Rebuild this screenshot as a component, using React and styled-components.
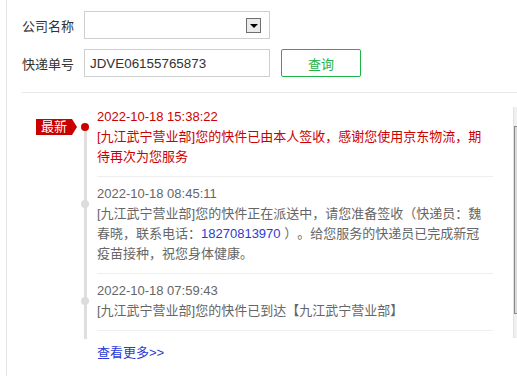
import styled, { createGlobalStyle } from "styled-components";

const GlobalStyle = createGlobalStyle`
  html, body {
    margin: 0;
    padding: 0;
    background: #fff;
    overflow: hidden;
  }
  body {
    font-family: "Liberation Sans", "Noto Sans CJK SC", sans-serif;
    font-size: 13px;
    color: #333;
  }
`;

const Page = styled.div`
  margin-left: 6px;
  border-left: 1px solid #e6e6e6;
  min-height: 376px;
`;

const Form = styled.div`
  display: flex;
  flex-direction: column;
  gap: 10px;
  padding: 11px 0 15px 15px;
`;

const FormRow = styled.div`
  display: flex;
  align-items: center;
`;

const Label = styled.span`
  width: 62px;
  font-size: 13px;
  color: #333;
`;

const SelectBox = styled.div`
  box-sizing: border-box;
  width: 186px;
  height: 28px;
  border: 1px solid #cfcfcf;
  display: flex;
  align-items: center;
  justify-content: flex-end;
  padding-right: 8px;
`;

const ArrowBox = styled.span`
  box-sizing: border-box;
  width: 15px;
  height: 15px;
  border: 1px solid #6f6f6f;
  background: #ebebeb;
  display: flex;
  align-items: center;
  justify-content: center;
  &::before {
    content: "";
    border-left: 4px solid transparent;
    border-right: 4px solid transparent;
    border-top: 4px solid #000;
    margin-top: 1px;
  }
`;

const Input = styled.div`
  box-sizing: border-box;
  width: 186px;
  height: 28px;
  border: 1px solid #cfcfcf;
  padding-left: 5px;
  display: flex;
  align-items: center;
  font-size: 13.4px;
  color: #333;
`;

const QueryButton = styled.button`
  box-sizing: border-box;
  margin-left: 11px;
  width: 80px;
  height: 28px;
  border: 1px solid #1db446;
  border-radius: 2px;
  background: #fff;
  color: #1db446;
  font-family: inherit;
  font-size: 13px;
  padding: 0;
`;

const Divider = styled.div`
  margin-left: 15px;
  border-top: 1px solid #e8e8e8;
`;

const TimelineArea = styled.div`
  display: flex;
`;

const List = styled.div`
  flex: 1;
  padding: 7px 0 8px;
  background: linear-gradient(#dedede, #dedede) no-repeat 77px 34px / 3px calc(100% - 34px);
`;

const Item = styled.div`
  display: flex;
`;

const BadgeSlot = styled.div`
  width: 71px;
  display: flex;
  justify-content: flex-end;
  align-items: flex-start;
`;

const Badge = styled.span`
  margin: 19px 1px 0 0;
  width: 41px;
  height: 16px;
  box-sizing: border-box;
  padding: 0 10px 0 5px;
  background: #c80000;
  color: #fff;
  font-size: 13px;
  line-height: 16px;
  clip-path: polygon(0 0, 36px 0, 100% 50%, 36px 100%, 0 100%);
`;

const Rail = styled.div`
  width: 14px;
  display: flex;
  justify-content: center;
`;

const Dot = styled.span`
  width: 8px;
  height: 8px;
  margin-top: 23px;
  border-radius: 50%;
  background: ${(p) => (p.$active ? "#cc0000" : "#dcdcdc")};
`;

const Body = styled.div`
  width: 396px;
  box-sizing: border-box;
  margin-left: 5px;
  padding: 7px 6px 9px 0;
  border-bottom: 1px solid #eeeeee;
  color: ${(p) => (p.$active ? "#cc0000" : "#666")};
  line-height: 20px;
  font-size: 13px;
  text-spacing-trim: space-all;
`;

const Time = styled.div``;

const Phone = styled.span`
  color: #2b3bd4;
`;

const ScrollTrack = styled.div`
  width: 4px;
  margin: 14px 0 1px;
  background: #f0f0f0;
  border-left: 1px solid #e2e2e2;
  box-sizing: border-box;
`;

const ScrollThumb = styled.div`
  margin-top: 19px;
  height: 186px;
  background: #dadada;
  border-left: 1px solid #8a8a8a;
  border-top: 1px solid #8a8a8a;
  border-bottom: 1px solid #8a8a8a;
`;

const More = styled.a`
  display: block;
  margin: 4px 0 0 90px;
  line-height: 20px;
  color: #2b3bd4;
  text-decoration: none;
  font-size: 13px;
`;

const tracks = [
  {
    time: "2022-10-18 15:38:22",
    text: "[九江武宁营业部]您的快件已由本人签收，感谢您使用京东物流，期待再次为您服务",
    active: true,
  },
  {
    time: "2022-10-18 08:45:11",
    text: (
      <>
        [九江武宁营业部]您的快件正在派送中，请您准备签收（快递员：魏春晓，联系电话：
        <Phone>18270813970</Phone> ）。给您服务的快递员已完成新冠疫苗接种，祝您身体健康。
      </>
    ),
  },
  {
    time: "2022-10-18 07:59:43",
    text: "[九江武宁营业部]您的快件已到达【九江武宁营业部】",
  },
];

export default function App() {
  return (
    <>
      <GlobalStyle />
      <Page>
        <Form>
          <FormRow>
            <Label>公司名称</Label>
            <SelectBox>
              <ArrowBox />
            </SelectBox>
          </FormRow>
          <FormRow>
            <Label>快递单号</Label>
            <Input>JDVE06155765873</Input>
            <QueryButton>查询</QueryButton>
          </FormRow>
        </Form>
        <Divider />
        <TimelineArea>
          <List>
            {tracks.map((t) => (
              <Item key={t.time}>
                <BadgeSlot>{t.active && <Badge>最新</Badge>}</BadgeSlot>
                <Rail>
                  <Dot $active={t.active} />
                </Rail>
                <Body $active={t.active}>
                  <Time>{t.time}</Time>
                  <div>{t.text}</div>
                </Body>
              </Item>
            ))}
          </List>
          <ScrollTrack>
            <ScrollThumb />
          </ScrollTrack>
        </TimelineArea>
        <More href="#">查看更多&gt;&gt;</More>
      </Page>
    </>
  );
}
